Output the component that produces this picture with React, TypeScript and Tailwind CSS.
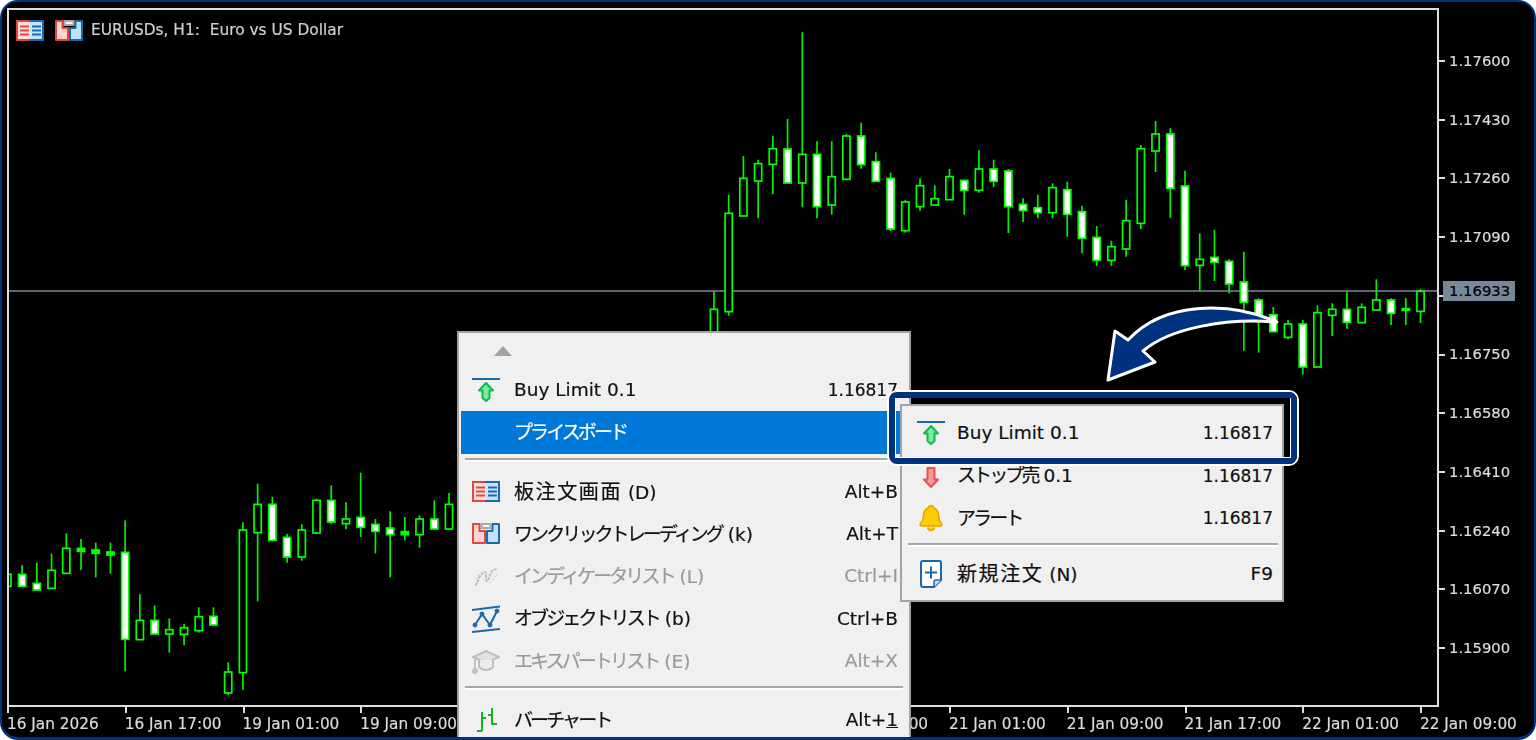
import React from "react";

const NAVY = "#00337f";

// candle rows: [index, high, bodyTop, bodyBottom, low, filled], y in 3x crop units
const toPx = (base: number, rows: number[][]) =>
  rows.map(([i, h, t, b, l, f]) => ({
    x: 7.4 + i * 14.72,
    high: base + h / 3,
    top: base + t / 3,
    bottom: base + b / 3,
    low: base + l / 3,
    filled: f === 1,
  }));

const CANDLES = [
  ...toPx(460, [
    [0, 343, 343, 379, 379, 0], [1, 315, 343, 379, 379, 1], [2, 308, 370, 390, 390, 1], [3, 281, 331, 385, 385, 0],
    [4, 220, 265, 340, 340, 0], [5, 237, 265, 274, 330, 1], [6, 248, 270, 280, 352, 1], [7, 248, 276, 285, 341, 1],
    [8, 181, 277, 538, 634, 1], [9, 403, 481, 539, 539, 0], [10, 436, 481, 522, 522, 1], [11, 475, 509, 522, 578, 0],
    [12, 491, 503, 523, 556, 0], [13, 442, 470, 512, 518, 0], [14, 442, 469, 495, 495, 1], [15, 607, 636, 699, 705, 0],
    [16, 187, 210, 638, 689, 0], [17, 71, 133, 218, 424, 0], [18, 110, 133, 241, 241, 1], [19, 221, 232, 291, 308, 1],
    [20, 193, 210, 291, 302, 0], [21, 116, 121, 219, 219, 0], [22, 76, 121, 186, 191, 1], [23, 127, 177, 191, 208, 0],
    [24, 38, 172, 202, 231, 1], [25, 177, 193, 214, 280, 1], [26, 154, 204, 224, 352, 1], [27, 171, 215, 224, 241, 1],
    [28, 166, 177, 224, 263, 0], [29, 121, 177, 207, 207, 1], [30, 99, 133, 207, 207, 0],
  ]),
  ...toPx(20, [
    [48, 813, 868, 1000, 1000, 0], [49, 524, 580, 875, 887, 0], [50, 408, 475, 588, 588, 0], [51, 419, 431, 483, 595, 0],
    [52, 347, 386, 433, 523, 0], [53, 297, 387, 489, 489, 1], [54, 37, 403, 489, 562, 0], [55, 364, 403, 560, 595, 1],
    [56, 364, 470, 555, 584, 0], [57, 342, 348, 478, 478, 0], [58, 308, 348, 434, 446, 1], [59, 397, 425, 484, 484, 1],
    [60, 458, 475, 627, 633, 1], [61, 540, 546, 632, 638, 0], [62, 475, 497, 560, 572, 0], [63, 496, 536, 555, 555, 0],
    [64, 447, 470, 539, 539, 0], [65, 481, 481, 511, 584, 1], [66, 391, 447, 511, 518, 0], [67, 419, 447, 484, 501, 1],
    [68, 447, 453, 560, 639, 1], [69, 535, 553, 572, 606, 1], [70, 524, 563, 578, 595, 1], [71, 490, 503, 578, 595, 0],
    [72, 485, 509, 583, 650, 1], [73, 557, 575, 655, 700, 1], [74, 618, 652, 721, 738, 1],
  ]),
  ...toPx(100, [
    [75, 422, 440, 481, 498, 0], [76, 300, 362, 447, 470, 0], [77, 135, 146, 370, 387, 0], [78, 63, 102, 153, 216, 0],
    [79, 85, 102, 265, 354, 1], [80, 212, 258, 497, 510, 1], [81, 400, 478, 496, 572, 0], [82, 389, 472, 487, 543, 1],
    [83, 478, 484, 552, 580, 1], [84, 455, 546, 607, 752, 1], [85, 595, 600, 645, 758, 1], [86, 621, 644, 695, 697, 1],
    [87, 660, 672, 712, 718, 0], [88, 660, 672, 801, 824, 1], [89, 616, 638, 801, 801, 0], [90, 610, 628, 646, 708, 0],
    [91, 576, 628, 667, 686, 1], [92, 610, 622, 668, 668, 0], [93, 538, 600, 630, 630, 0], [94, 595, 600, 640, 675, 1],
    [95, 594, 626, 631, 675, 1], [96, 566, 574, 634, 669, 0],
  ]),
];

const PRICES = ["1.17600", "1.17430", "1.17260", "1.17090", "1.16920", "1.16750", "1.16580", "1.16410", "1.16240", "1.16070", "1.15900"];
const TIMES = ["16 Jan 2026", "16 Jan 17:00", "19 Jan 01:00", "19 Jan 09:00", "19 Jan 17:00", "20 Jan 01:00", "20 Jan 09:00", "20 Jan 17:00", "21 Jan 01:00", "21 Jan 09:00", "21 Jan 17:00", "22 Jan 01:00", "22 Jan 09:00"];

function TableIcon() {
  return (
    <svg width="28" height="21" viewBox="0 0 28 21" fill="none">
      <path d="M14 1H1v19h13z" fill="#fff" stroke="#e0483f" strokeWidth="2" />
      <path d="M14 1h13v19H14z" fill="#fff" stroke="#1b69ad" strokeWidth="2" />
      <path d="M2 2h12v17H2z" fill="#fde0dc" />
      <path d="M14 2h12v17H14z" fill="#c4e4fb" />
      <path d="M4 6.5h9M4 10.5h9M4 14.5h9" stroke="#e0483f" strokeWidth="2" />
      <path d="M16 6.5h9M16 10.5h9M16 14.5h9" stroke="#1b69ad" strokeWidth="2" />
    </svg>
  );
}

function OneClickIcon() {
  return (
    <svg width="28" height="21" viewBox="0 0 28 21" fill="none">
      <path d="M1 1h6.500v7H13v12H1z" fill="#fbd5d0" stroke="#e0483f" strokeWidth="2" strokeLinejoin="round" />
      <path d="M27 1h-6.500v7H15v12h12z" fill="#bfe3fb" stroke="#1b69ad" strokeWidth="2" strokeLinejoin="round" />
      <rect x="9.500" y="1" width="9" height="4" fill="#f4f4f4" stroke="#a8a8a8" strokeWidth="2" />
    </svg>
  );
}

function PendingArrow({ up }: { up: boolean }) {
  const color = up ? "#12b84a" : "#e85050";
  const fill = up ? "#7fe89f" : "#f59a95";
  return (
    <svg width="28" height="24" viewBox="0 0 28 24" fill="none">
      {up && <path d="M0 1h28" stroke="#1b69ad" strokeWidth="2" />}
      {up ? (
        <path d="M14 5l7 7.5h-3.500V20L14 23l-3.500-3v-7.500H7z" fill={fill} stroke={color} strokeWidth="2" strokeLinejoin="round" />
      ) : (
        <path d="M14 23l7-7.500h-3.500V4h-7v11.500H7z" fill={fill} stroke={color} strokeWidth="2" strokeLinejoin="round" />
      )}
    </svg>
  );
}

function BellIcon() {
  return (
    <svg width="24" height="28" viewBox="0 0 24 28" fill="none">
      <path d="M12 1.500c1.600 0 2.400 1 2.600 2.200 3.600 1.200 5 4.400 5 8.300 0 4 1.600 6 3 7.600.8 1 .2 2.400-1.200 2.400H2.600c-1.400 0-2-1.400-1.200-2.400 1.400-1.600 3-3.600 3-7.600 0-3.900 1.400-7.100 5-8.300C9.600 2.500 10.400 1.500 12 1.500z" fill="#ffcb05" stroke="#e0a800" strokeWidth="1.500" />
      <path d="M8.500 23.500c.6 2 2 3 3.500 3s2.900-1 3.500-3" fill="#ffcb05" stroke="#e0a800" strokeWidth="1.500" />
    </svg>
  );
}

function NewOrderIcon() {
  return (
    <svg width="22" height="28" viewBox="0 0 22 28" fill="none">
      <path d="M3 1h16.500c.8 0 1.500.7 1.500 1.500V20l-7 7H3c-1 0-2-1-2-2V3c0-1 1-2 2-2z" fill="#fff" stroke="#1b69ad" strokeWidth="2" />
      <path d="M14 27v-5c0-1 1-2 2-2h5" fill="#cfe3f3" stroke="#1b69ad" strokeWidth="1.500" />
      <path d="M11 6.500v12M5 12.500h12" stroke="#1b69ad" strokeWidth="2" />
    </svg>
  );
}

function IndicatorIcon() {
  return (
    <svg width="28" height="24" viewBox="0 0 28 24" fill="none" stroke="#bcbcbc" strokeWidth="2">
      <path d="M3 21c3-1 3-7 5-9s3-4 5-4 0 9 2 9 3-8 5-10 3-1 5-2" strokeDasharray="3 1" />
      <path d="M4 15c2-2 3-6 6-7M18 19c2-1 5-7 8-9" strokeWidth="1" strokeDasharray="2 2" />
    </svg>
  );
}

function ObjectListIcon() {
  return (
    <svg width="28" height="28" viewBox="0 0 28 28" fill="none" stroke="#1b69ad">
      <path d="M0 5L28 1.500M0 27L28 24" strokeWidth="2" />
      <path d="M3 20L10 9l8 11 7-14" strokeWidth="2" />
      <g fill="#1b69ad">
        <circle cx="3" cy="20" r="2" />
        <circle cx="10" cy="9" r="2" />
        <circle cx="18" cy="20" r="2" />
        <circle cx="25" cy="6" r="2" />
      </g>
    </svg>
  );
}

function ExpertIcon() {
  return (
    <svg width="28" height="26" viewBox="0 0 28 26" fill="none" stroke="#c0c0c0" strokeWidth="2">
      <path d="M1 9l13-6 13 6-13 6z" fill="#e2e2e2" />
      <path d="M7 12v7c2 2 5 3 7 3s5-1 7-3v-7" fill="#ececec" />
      <path d="M3 10v11" />
      <circle cx="3" cy="23" r="2" fill="#c0c0c0" />
    </svg>
  );
}

function BarChartIcon() {
  return (
    <svg width="24" height="26" viewBox="0 0 24 26" fill="none" stroke="#12b81f" strokeWidth="2">
      <path d="M8 5v19M3 24h5M8 11h4" />
      <path d="M18 1v17M14 8h4M18 17h5" />
    </svg>
  );
}

type Row = {
  icon?: React.ReactNode;
  label: React.ReactNode;
  right?: React.ReactNode;
  disabled?: boolean;
  active?: boolean;
};

const kana = "text-[19px] tracking-[-2.9px]";
const kanji = "text-[20px] tracking-[1.6px]";
const price = "text-[17px]";

function MenuRow({ icon, label, right, disabled, active }: Row) {
  return (
    <div className={`flex h-[42.4px] items-center pl-[11px] pr-[9px] ${active ? "bg-[#0078d7] text-white" : disabled ? "text-[#9a9a9a]" : "text-[#111111]"}`}>
      <div className="flex w-[28px] shrink-0 justify-center">{icon}</div>
      <div className="ml-[14px] flex-1 whitespace-nowrap">{label}</div>
      <div className="whitespace-nowrap">{right}</div>
    </div>
  );
}

function Separator({ className }: { className: string }) {
  return (
    <div className={`flex flex-col pt-[4px] px-[4px] ${className}`}>
      <div className="h-[2px] bg-[#a6a6a6]" />
      <div className="h-[2px] bg-white" />
    </div>
  );
}

export default function App() {
  return (
    <div className="h-[740px] w-[1536px] overflow-hidden bg-white font-['DejaVu_Sans','Noto_Sans_CJK_JP',sans-serif] [-webkit-text-stroke:0.2px]">
      <div className="relative h-[740px] overflow-hidden rounded-[18px] border-x-2 border-t-2 border-b-[3px] border-[#00337f] bg-black pl-[5px] pt-[6px] blur-[0.35px]">
        <div className="flex">
          {/* plot */}
          <div className="h-[699px] w-[1432px] shrink-0 border-2 border-[#dedede]">
            <svg width="1428" height="695" viewBox="9 10 1428 695" className="block">
              <line x1="9" x2="1437" y1="291" y2="291" stroke="#7a8899" strokeWidth="1.500" />
              {CANDLES.map((c) => (
                <g key={c.x}>
                  <line x1={c.x} x2={c.x} y1={c.high} y2={c.low} stroke="#00f000" strokeWidth="1.700" />
                  <rect
                    x={c.x - 3.6}
                    y={c.top}
                    width="7.200"
                    height={c.bottom - c.top}
                    fill={c.filled ? (c.bottom - c.top < 4 ? "#00ff00" : "#ffffff") : "#000000"}
                    stroke="#00ff00"
                    strokeWidth="1.700"
                  />
                </g>
              ))}
            </svg>
          </div>
          {/* price scale */}
          <div className="flex flex-col pt-[23.600px] text-[14.800px] text-[#dcdcdc]">
            {PRICES.map((p) => (
              <div key={p} className="flex h-[58.720px] items-center gap-[4px]">
                <div className="h-[2px] w-[6px] bg-[#dedede]" />
                <span>{p}</span>
              </div>
            ))}
          </div>
        </div>

        {/* time scale */}
        <div className="flex text-[15.300px] text-[#dcdcdc]">
          {TIMES.map((t) => (
            <div key={t} className="w-[117.760px] shrink-0">
              <div className="h-[6px] w-[2px] bg-[#dedede]" />
              <div className="mt-[1px] whitespace-nowrap leading-[21px]">{t}</div>
            </div>
          ))}
        </div>

        {/* chart title with quick buttons */}
        <div className="absolute left-[14px] top-[17px] flex items-center text-[15.400px] text-[#d0d0d0]">
          <TableIcon />
          <div className="ml-[11px]"><OneClickIcon /></div>
          <span className="ml-[8px] whitespace-pre">EURUSDs, H1:  Euro vs US Dollar</span>
        </div>

        {/* current price */}
        <div className="absolute left-[1441px] top-[279px] flex h-[20px] w-[72px] items-center bg-[#778899] pl-[6px] text-[14.800px] text-black">
          1.16933
        </div>

        {/* context menu */}
        <div className="absolute left-[455px] top-[329px] h-[420px] w-[454px] border-2 border-[#a3a3a3] bg-[#f0f0f0] px-[2px] text-[18.500px]">
          <div className="flex h-[36px] items-center pl-[33px]">
            <div className="h-0 w-0 border-x-[9px] border-b-[10px] border-x-transparent border-b-[#a3a3a3]" />
          </div>
          <MenuRow icon={<PendingArrow up />} label="Buy Limit 0.1" right={<span className={price}>1.16817</span>} />
          <MenuRow active label={<span className={kana}>プライスボード</span>} />
          <Separator className="h-[16.600px]" />
          <MenuRow icon={<TableIcon />} label={<><span className={kanji}>板注文画面</span> (D)</>} right="Alt+B" />
          <MenuRow icon={<OneClickIcon />} label={<><span className={kana}>ワンクリックトレーディング</span> (k)</>} right="Alt+T" />
          <MenuRow disabled icon={<IndicatorIcon />} label={<><span className={kana}>インディケータリスト</span> (L)</>} right="Ctrl+I" />
          <MenuRow icon={<ObjectListIcon />} label={<><span className={kana}>オブジェクトリスト</span> (b)</>} right="Ctrl+B" />
          <MenuRow disabled icon={<ExpertIcon />} label={<><span className={kana}>エキスパートリスト</span> (E)</>} right="Alt+X" />
          <Separator className="h-[16.600px]" />
          <MenuRow icon={<BarChartIcon />} label={<span className={kana}>バーチャート</span>} right={<>Alt+<span className="underline">1</span></>} />
        </div>

        {/* submenu */}
        <div className="absolute left-[898px] top-[402px] w-[384px] border-2 border-[#a3a3a3] bg-[#f0f0f0] pb-[4px] pl-[2px] pt-[6px] text-[18.500px] [&_svg]:translate-x-[2px]">
          <MenuRow icon={<PendingArrow up />} label="Buy Limit 0.1" right={<span className={price}>1.16817</span>} />
          <MenuRow icon={<PendingArrow up={false} />} label={<><span className={kana}>ストップ売</span> 0.1</>} right={<span className={price}>1.16817</span>} />
          <MenuRow icon={<BellIcon />} label={<span className={kana}>アラート</span>} right={<span className={price}>1.16817</span>} />
          <Separator className="h-[14px]" />
          <MenuRow icon={<NewOrderIcon />} label={<><span className={kanji}>新規注文</span> (N)</>} right="F9" />
        </div>

        {/* callout box */}
        <div className="pointer-events-none absolute left-[885px] top-[388px] h-[76px] w-[412px] rounded-[10px] border-2 border-white">
          <div className="h-full rounded-[8px] border-[6px] border-[#00337f]">
            <div className="h-full border-x border-b border-white" />
          </div>
        </div>

        {/* callout arrow */}
        <svg className="absolute left-[1098px] top-[298px]" width="186" height="90" viewBox="1100 300 186 90">
          <path
            d="M1277 322C1232 302 1165 300 1128 340L1115 331L1108 380L1155 362L1143 351C1170 328 1225 318 1277 322Z"
            fill={NAVY}
            stroke="#fff"
            strokeWidth="3"
            strokeLinejoin="round"
          />
        </svg>
      </div>
    </div>
  );
}
